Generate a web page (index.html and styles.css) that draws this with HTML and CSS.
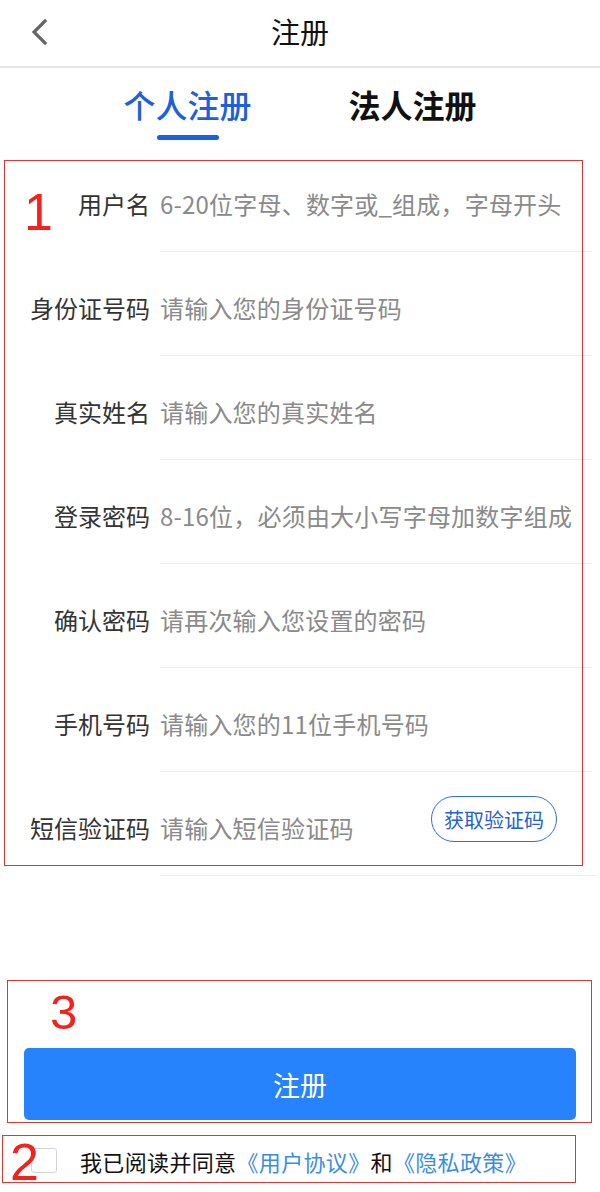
FILE: index.html
```html
<!DOCTYPE html>
<html lang="zh-CN">
<head>
<meta charset="utf-8">
<title>注册</title>
<link rel="stylesheet" href="styles.css">
</head>
<body>
<div class="page">
  <header class="nav">
    <span class="back">
      <svg width="20" height="28" viewBox="0 0 20 28"><path d="M15 3 L4 14 L15 25" fill="none" stroke="#666" stroke-width="3.2" stroke-linecap="square" stroke-linejoin="miter"/></svg>
    </span>
    <h1 class="title">注册</h1>
  </header>

  <nav class="tabs">
    <div class="tab active"><span class="tab-text">个人注册</span><span class="tab-bar"></span></div>
    <div class="tab"><span class="tab-text">法人注册</span><span class="tab-bar"></span></div>
  </nav>

  <form class="form">
    <div class="row"><label class="label">用户名</label><div class="field"><input class="input" placeholder="6-20位字母、数字或_组成，字母开头"></div></div>
    <div class="row"><label class="label">身份证号码</label><div class="field"><input class="input" placeholder="请输入您的身份证号码"></div></div>
    <div class="row"><label class="label">真实姓名</label><div class="field"><input class="input" placeholder="请输入您的真实姓名"></div></div>
    <div class="row"><label class="label">登录密码</label><div class="field"><input class="input" placeholder="8-16位，必须由大小写字母加数字组成"></div></div>
    <div class="row"><label class="label">确认密码</label><div class="field"><input class="input" placeholder="请再次输入您设置的密码"></div></div>
    <div class="row"><label class="label">手机号码</label><div class="field"><input class="input" placeholder="请输入您的11位手机号码"></div></div>
    <div class="row"><label class="label">短信验证码</label><div class="field"><input class="input" placeholder="请输入短信验证码"><span class="code-btn">获取验证码</span></div></div>
  </form>

  <div class="submit-wrap">
    <button class="submit" type="button">注册</button>
  </div>

  <div class="agree">
    <span class="checkbox"></span>
    <span class="agree-text">我已阅读并同意<a class="link">《用户协议》</a>和<a class="link">《隐私政策》</a></span>
  </div>

  <div class="mark mark-1"><span class="mark-num num-1">1</span></div>
  <div class="mark mark-3"><span class="mark-num num-3">3</span></div>
  <div class="mark mark-2"><span class="mark-num num-2">2</span></div>
</div>
</body>
</html>
```
FILE: styles.css
```css
* { box-sizing: border-box; }
html, body { margin: 0; padding: 0; background: #fff; }
body {
  font-family: "Noto Sans CJK SC", "Noto Sans", sans-serif;
  color: #333;
}
.page {
  position: relative;
  width: 600px;
  height: 1192px;
  overflow: hidden;
}
.nav {
  position: relative;
  height: 68px;
  border-bottom: 2px solid #e6e6e6;
  display: flex;
  align-items: center;
  justify-content: center;
}
.back {
  position: absolute;
  left: 30px;
  top: 18px;
  width: 20px;
  height: 28px;
  display: flex;
}
.title {
  margin: 0;
  font-size: 29px;
  font-weight: 400;
  color: #111;
  line-height: 40px;
  margin-top: -4px;
}
.tabs {
  display: flex;
  justify-content: center;
  padding-top: 16px;
  height: 80px;
}
.tab {
  width: 225px;
  display: flex;
  flex-direction: column;
  align-items: center;
}
.tab-text {
  font-size: 32px;
  line-height: 40px;
  font-weight: 700;
  color: #111;
}
.tab-bar {
  margin-top: 11px;
  width: 62px;
  height: 5px;
  border-radius: 3px;
  background: transparent;
}
.tab.active .tab-text { color: #1d60de; font-weight: 500; }
.tab.active .tab-bar { background: #1d60de; }

.form { margin: 0; }
.row {
  display: flex;
  height: 104px;
}
.label {
  width: 150px;
  flex: none;
  text-align: right;
  font-size: 24px;
  line-height: 32px;
  color: #333;
  align-self: flex-end;
  padding-bottom: 32px;
  white-space: nowrap;
}
.field {
  flex: 1;
  margin-left: 10px;
  margin-right: 8px;
  border-bottom: 1px solid #efefef;
  display: flex;
  align-items: flex-end;
  padding-bottom: 31px;
}
.input {
  flex: 1;
  min-width: 0;
  border: none;
  outline: none;
  background: transparent;
  padding: 0;
  margin: 0;
  height: 32px;
  font-family: inherit;
  font-size: 24px;
  line-height: 32px;
  letter-spacing: 0.2px;
  color: #333;
}
.input::placeholder { color: #8a8a8a; }
.code-btn {
  flex: none;
  width: 126px;
  height: 46px;
  margin-right: 41px;
  margin-bottom: 2px;
  border: 1.5px solid #2e6ddf;
  border-radius: 23px;
  color: #2660d4;
  font-size: 20px;
  display: flex;
  align-items: center;
  justify-content: center;
}

.submit-wrap {
  margin-top: 172px;
  padding: 0 24px;
}
.submit {
  display: block;
  width: 100%;
  height: 72px;
  border: none;
  border-radius: 5px;
  background: #2683fb;
  color: #fff;
  font-family: inherit;
  font-size: 27px;
  padding: 0;
}
.agree {
  margin-top: 28px;
  display: flex;
  align-items: center;
  padding-left: 31px;
  height: 25px;
}
.checkbox {
  width: 26px;
  height: 25px;
  border: 1px solid #d4d4d4;
  border-radius: 3px;
  background: #fff;
  flex: none;
}
.agree-text {
  margin-left: 23px;
  font-size: 22px;
  line-height: 30px;
  letter-spacing: 0.35px;
  color: #111;
  white-space: nowrap;
}
.link { color: #3a8de6; text-decoration: none; }

.mark {
  position: absolute;
  border: 1.5px solid #e8322e;
  pointer-events: none;
}
.mark-1 { left: 4px; top: 160px; width: 579px; height: 706px; }
.mark-3 { left: 7px; top: 980px; width: 585px; height: 143px; }
.mark-2 { left: 2px; top: 1135px; width: 574px; height: 48px; }
.mark-num {
  position: absolute;
  font-family: "Liberation Sans", "Noto Sans", sans-serif;
  color: #f2231c;
  line-height: 1;
}
.num-1 { left: 19px; top: 25px; font-size: 52px; }
.num-3 { left: 42px; top: 7px; font-size: 49px; }
.num-2 { left: 7px; top: 0px; font-size: 52px; }
```
